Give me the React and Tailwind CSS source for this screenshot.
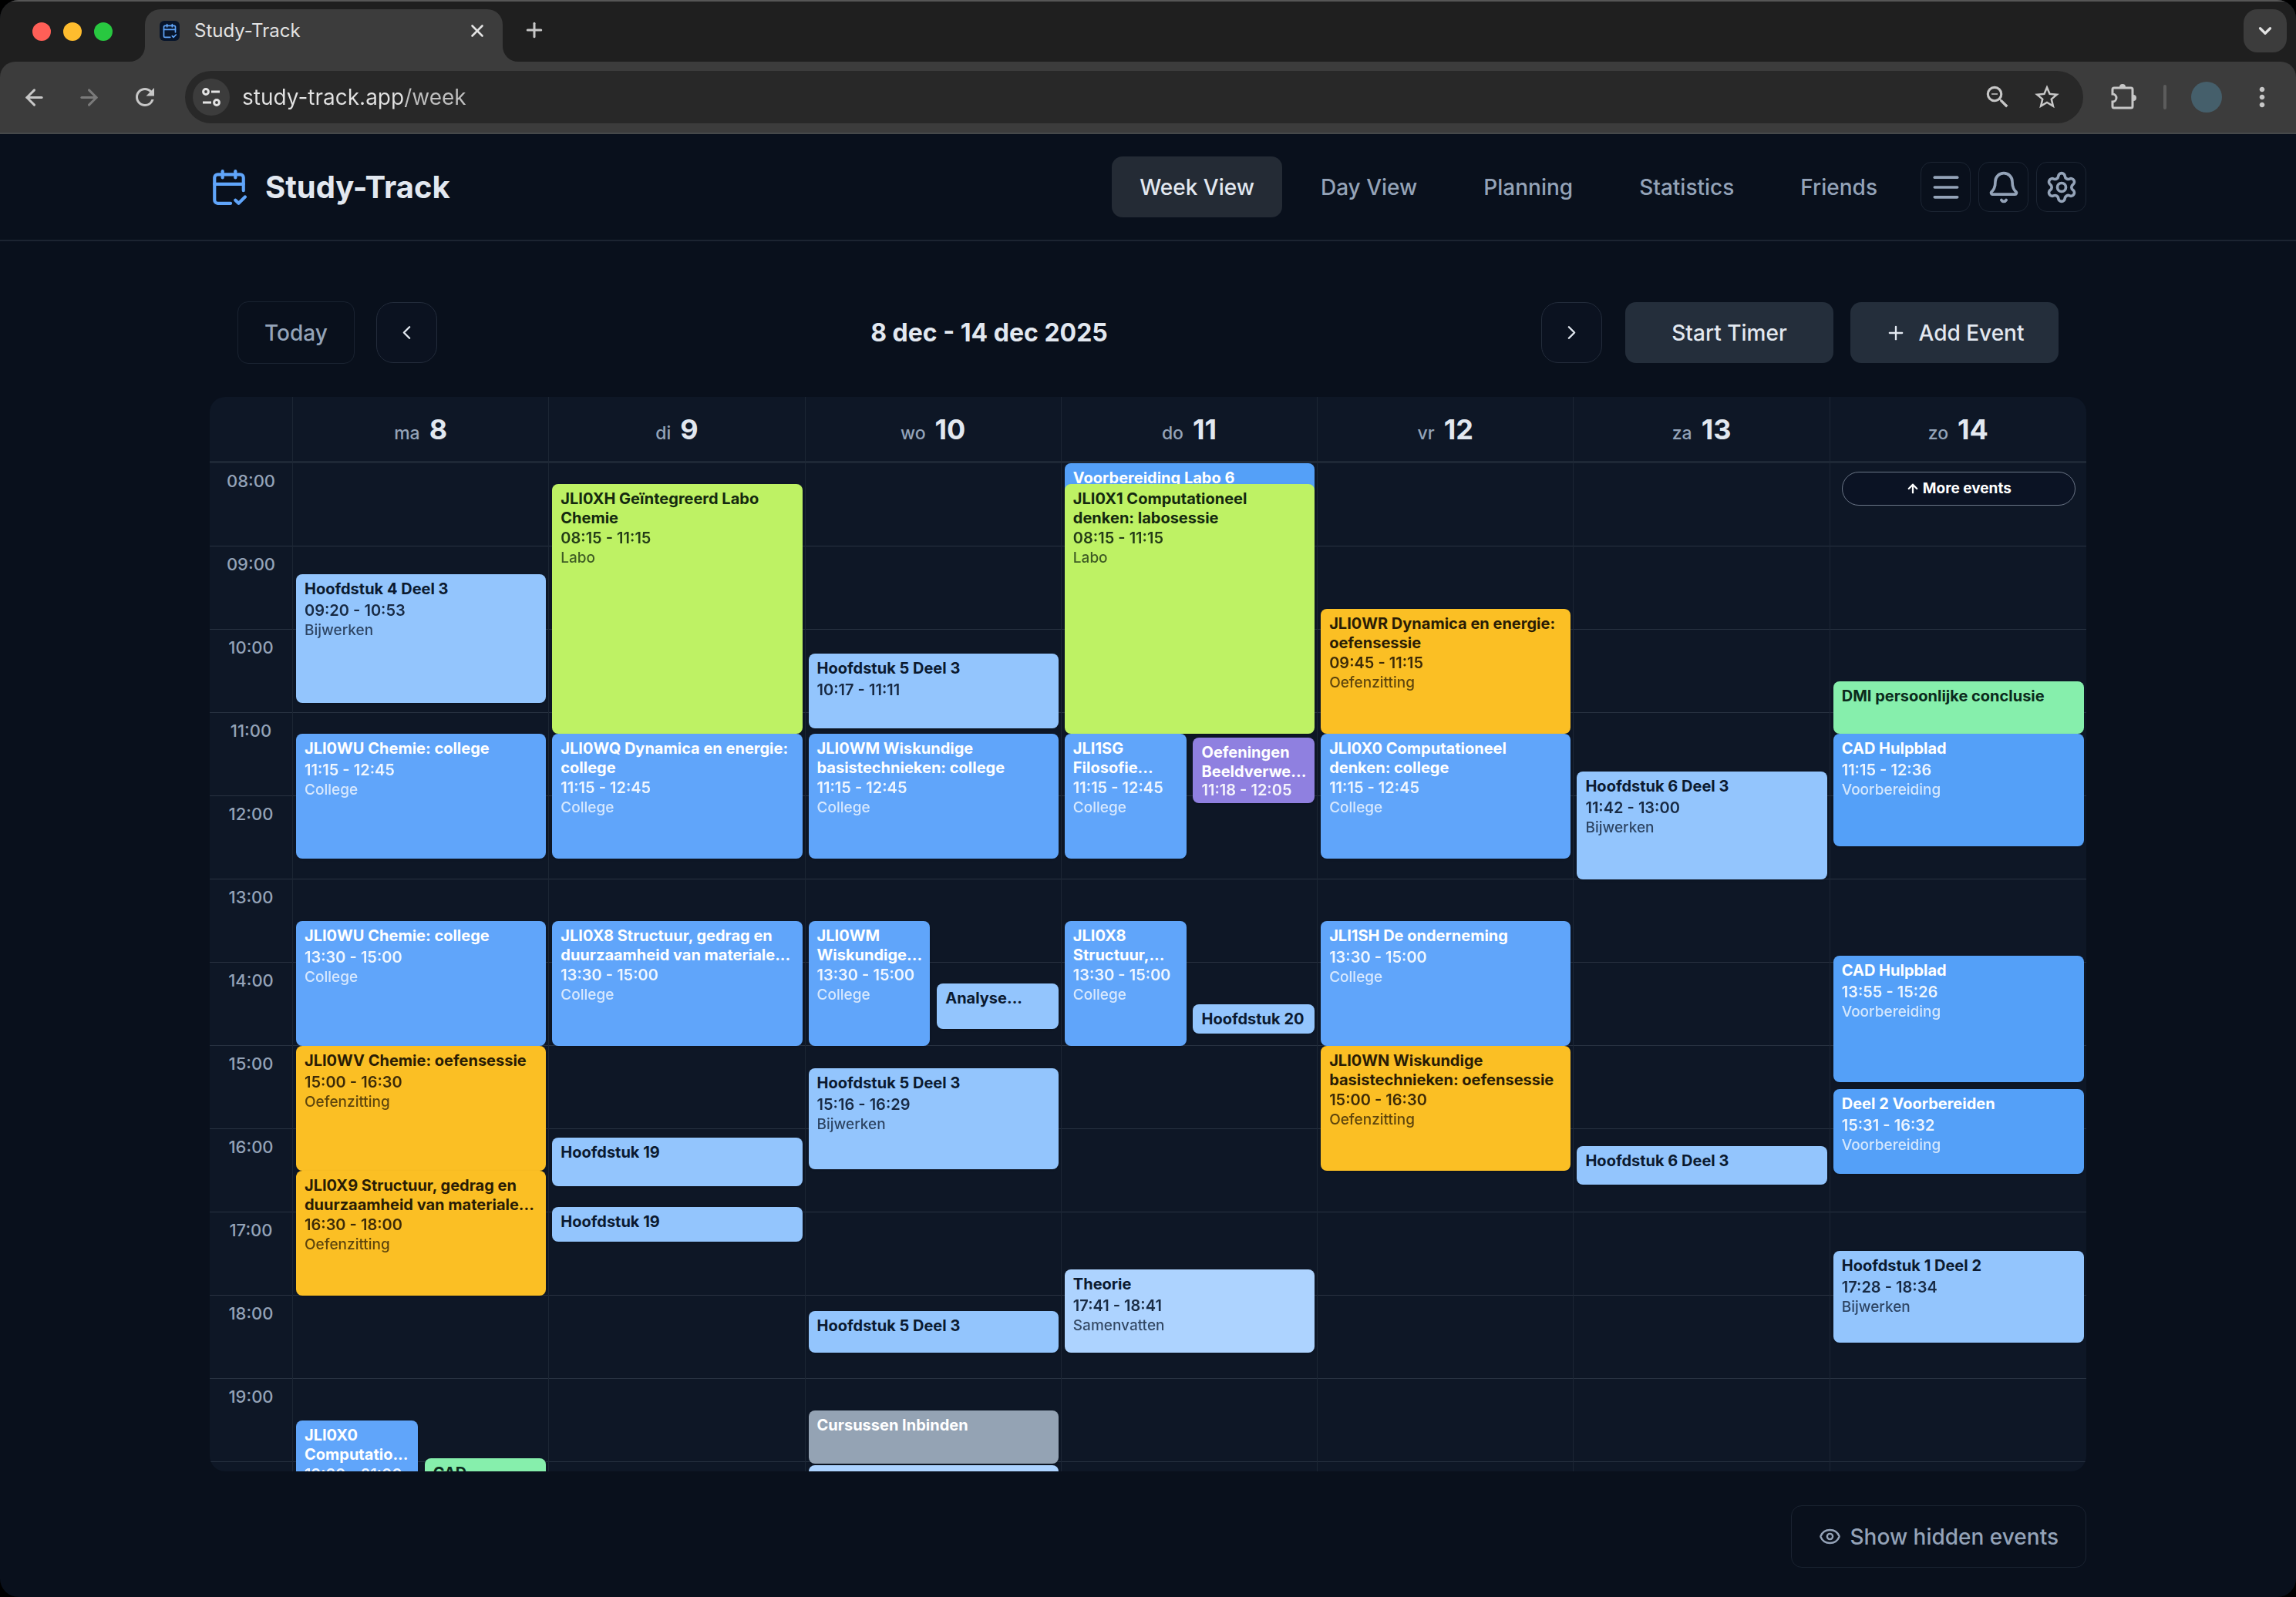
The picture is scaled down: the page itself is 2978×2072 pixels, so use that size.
import React from "react";
import {
  ArrowLeft, ArrowRight, X, Plus, ChevronDown, ChevronLeft, ChevronRight,
  CalendarCheck2, Menu, Bell, Eye, ArrowUp, Settings,
} from "lucide-react";
import { MdStarBorder, MdMoreVert, MdOutlineZoomOut, MdRefresh } from "react-icons/md";

const HOUR = 108;

const tones = {
  sky: "bg-[#93c5fd] text-[#0b1a30]",
  pale: "bg-[#add3ff] text-[#0b1a30]",
  blue: "bg-[#60a5fa] text-white",
  azure: "bg-[#54a0f8] text-white",
  lime: "bg-[#bef264] text-[#14290f]",
  amber: "bg-[#fbbf24] text-[#291c05]",
  mint: "bg-[#86efac] text-[#0b2a1c]",
  violet: "bg-[#8f80e0] text-white",
  slate: "bg-[#94a3b4] text-white",
};

const days = [
  {
    name: "ma", date: 8,
    events: [
      { from: "09:20", to: "10:53", title: "Hoofdstuk 4 Deel 3", kind: "Bijwerken", tone: "sky" },
      { from: "11:15", to: "12:45", title: "JLI0WU Chemie: college", kind: "College", tone: "blue" },
      { from: "13:30", to: "15:00", title: "JLI0WU Chemie: college", kind: "College", tone: "blue" },
      { from: "15:00", to: "16:30", title: "JLI0WV Chemie: oefensessie", kind: "Oefenzitting", tone: "amber" },
      { from: "16:30", to: "18:00", title: "JLI0X9 Structuur, gedrag en\nduurzaamheid van materiale...", kind: "Oefenzitting", tone: "amber" },
      { from: "19:30", to: "21:00", title: "JLI0X0\nComputatio...", tone: "blue", half: "left" },
      { from: "19:57", to: "20:40", title: "CAD", tone: "mint", half: "right", brief: true },
    ],
  },
  {
    name: "di", date: 9,
    events: [
      { from: "08:15", to: "11:15", title: "JLI0XH Geïntegreerd Labo\nChemie", kind: "Labo", tone: "lime" },
      { from: "11:15", to: "12:45", title: "JLI0WQ Dynamica en energie:\ncollege", kind: "College", tone: "blue" },
      { from: "13:30", to: "15:00", title: "JLI0X8 Structuur, gedrag en\nduurzaamheid van materiale...", kind: "College", tone: "blue" },
      { from: "16:06", to: "16:41", title: "Hoofdstuk 19", tone: "sky", brief: true },
      { from: "16:56", to: "17:21", title: "Hoofdstuk 19", tone: "sky", brief: true },
    ],
  },
  {
    name: "wo", date: 10,
    events: [
      { from: "10:17", to: "11:11", title: "Hoofdstuk 5 Deel 3", tone: "sky" },
      { from: "11:15", to: "12:45", title: "JLI0WM Wiskundige\nbasistechnieken: college", kind: "College", tone: "blue" },
      { from: "13:30", to: "15:00", title: "JLI0WM\nWiskundige...", kind: "College", tone: "blue", half: "left" },
      { from: "14:15", to: "14:48", title: "Analyse...", tone: "sky", half: "right", brief: true },
      { from: "15:16", to: "16:29", title: "Hoofdstuk 5 Deel 3", kind: "Bijwerken", tone: "sky" },
      { from: "18:11", to: "18:41", title: "Hoofdstuk 5 Deel 3", tone: "sky", brief: true },
      { from: "19:23", to: "20:01", title: "Cursussen Inbinden", tone: "slate", brief: true },
      { from: "20:02", to: "21:00", tone: "pale", brief: true },
    ],
  },
  {
    name: "do", date: 11,
    events: [
      { from: "08:00", to: "08:30", title: "Voorbereiding Labo 6", tone: "azure", brief: true },
      { from: "08:15", to: "11:15", title: "JLI0X1 Computationeel\ndenken: labosessie", kind: "Labo", tone: "lime" },
      { from: "11:15", to: "12:45", title: "JLI1SG\nFilosofie...", kind: "College", tone: "blue", half: "left" },
      { from: "11:18", to: "12:05", title: "Oefeningen\nBeeldverwe...", tone: "violet", half: "right", dense: true },
      { from: "13:30", to: "15:00", title: "JLI0X8\nStructuur,...", kind: "College", tone: "blue", half: "left" },
      { from: "14:30", to: "14:51", title: "Hoofdstuk 20", tone: "sky", half: "right", brief: true },
      { from: "17:41", to: "18:41", title: "Theorie", kind: "Samenvatten", tone: "pale" },
    ],
  },
  {
    name: "vr", date: 12,
    events: [
      { from: "09:45", to: "11:15", title: "JLI0WR Dynamica en energie:\noefensessie", kind: "Oefenzitting", tone: "amber" },
      { from: "11:15", to: "12:45", title: "JLI0X0 Computationeel\ndenken: college", kind: "College", tone: "blue" },
      { from: "13:30", to: "15:00", title: "JLI1SH De onderneming", kind: "College", tone: "blue" },
      { from: "15:00", to: "16:30", title: "JLI0WN Wiskundige\nbasistechnieken: oefensessie", kind: "Oefenzitting", tone: "amber" },
    ],
  },
  {
    name: "za", date: 13,
    events: [
      { from: "11:42", to: "13:00", title: "Hoofdstuk 6 Deel 3", kind: "Bijwerken", tone: "sky" },
      { from: "16:12", to: "16:40", title: "Hoofdstuk 6 Deel 3", tone: "sky", brief: true },
    ],
  },
  {
    name: "zo", date: 14, more: true,
    events: [
      { from: "10:37", to: "11:15", title: "DMI persoonlijke conclusie", tone: "mint", brief: true },
      { from: "11:15", to: "12:36", title: "CAD Hulpblad", kind: "Voorbereiding", tone: "azure" },
      { from: "13:55", to: "15:26", title: "CAD Hulpblad", kind: "Voorbereiding", tone: "azure" },
      { from: "15:31", to: "16:32", title: "Deel 2 Voorbereiden", kind: "Voorbereiding", tone: "azure" },
      { from: "17:28", to: "18:34", title: "Hoofdstuk 1 Deel 2", kind: "Bijwerken", tone: "sky" },
    ],
  },
];

const hours = Array.from({ length: 13 }, (_, i) => String(i + 8).padStart(2, "0") + ":00");

function offset(time) {
  const [h, m] = time.split(":").map(Number);
  return Math.round(((h - 8) * 60 + m) * (HOUR / 60));
}

function Event({ event }) {
  const top = offset(event.from);
  const height = offset(event.to) - top;
  const twoLines = event.title?.includes("\n");
  const side =
    event.half === "left" ? "left-1 right-1/2 mr-1" : event.half === "right" ? "left-1/2 ml-[5px] right-[3px]" : "left-1 right-[3px]";
  const timeSpacing = event.dense ? "leading-[22px]" : twoLines ? "leading-[26px]" : "mt-0.5 leading-[26px]";
  return (
    <article
      className={`absolute overflow-hidden rounded-lg px-[11px] pt-[7px] shadow-sm ${side} ${tones[event.tone]}`}
      style={{ top, height }}
    >
      {event.title && <h3 className="whitespace-pre text-[20px]/[25px] font-bold">{event.title}</h3>}
      {!event.brief && (
        <p className={`whitespace-nowrap text-[20px] font-semibold opacity-90 ${timeSpacing}`}>
          {event.from} - {event.to}
        </p>
      )}
      {event.kind && <p className="whitespace-nowrap text-[19px]/[26px] font-medium opacity-75">{event.kind}</p>}
    </article>
  );
}

function Chrome() {
  return (
    <div className="bg-[#1f1f1f]">
      <div className="flex h-20 items-stretch border-t-2 border-[#565656] pr-3">
        <div className="flex w-[188px] items-center gap-4 pl-[42px]">
          <span className="size-6 rounded-full bg-[#ff5f57]" />
          <span className="size-6 rounded-full bg-[#febc2e]" />
          <span className="size-6 rounded-full bg-[#28c840]" />
        </div>
        <div className="flex">
          <svg className="-ml-5 size-5 shrink-0 self-end" viewBox="0 0 20 20" aria-hidden="true">
            <path d="M20 0v20H0A20 20 0 0 0 20 0Z" fill="#3c3c3c" />
          </svg>
          <div className="mt-2.5 flex w-[464px] items-center rounded-t-[20px] bg-[#3c3c3c] pr-5 pb-3 pl-[19px]">
            <span className="flex size-[26px] items-center justify-center rounded-md bg-[#08152b] text-[#60a5fa]">
              <CalendarCheck2 size={20} strokeWidth={2} />
            </span>
            <span className="ml-[19px] flex-1 text-[24px] text-[#e3e3e3]">Study-Track</span>
            <button aria-label="Close tab" className="text-[#e3e3e3]"><X size={26} strokeWidth={2.4} /></button>
          </div>
          <svg className="size-5 shrink-0 self-end" viewBox="0 0 20 20" aria-hidden="true">
            <path d="M0 0v20h20A20 20 0 0 1 0 0Z" fill="#3c3c3c" />
          </svg>
        </div>
        <button aria-label="New tab" className="ml-1.5 pb-1 text-[#c7c7c7]"><Plus size={30} strokeWidth={2.4} /></button>
        <button aria-label="Search tabs" className="mt-2.5 ml-auto flex size-14 items-center justify-center rounded-[18px] bg-[#3c3c3c] text-[#e3e3e3]">
          <ChevronDown size={26} strokeWidth={3} />
        </button>
      </div>
      <div className="flex h-[94px] items-center rounded-t-[20px] border-b-2 border-[#46494a] bg-[#3c3c3c] text-[#c7c7c7]">
        <button aria-label="Back" className="ml-[28px]"><ArrowLeft size={33} strokeWidth={2.2} /></button>
        <button aria-label="Forward" className="ml-[38px] text-[#7a7a7a]"><ArrowRight size={33} strokeWidth={2.2} /></button>
        <button aria-label="Reload" className="ml-[38px]"><MdRefresh size={36} /></button>
        <div className="ml-[34px] flex h-[68px] flex-1 items-center rounded-full bg-[#282828] pr-7 pl-2.5">
          <button aria-label="Site information" className="flex size-12 items-center justify-center rounded-full bg-[#3c3c3c] text-[#e3e3e3]">
            <svg width="28" height="28" viewBox="0 0 28 28" fill="none" stroke="currentColor" strokeWidth="3">
              <circle cx="7" cy="7" r="3.4" /><path d="M14 7h11M3 21h11" /><circle cx="21" cy="21" r="3.4" />
            </svg>
          </button>
          <input
            aria-label="Address"
            defaultValue="study-track.app/week"
            className="ml-4 min-w-0 flex-1 bg-[linear-gradient(90deg,#e3e3e3_212px,#c0c0c0_212px)] bg-clip-text text-[28px] text-transparent outline-none"
          />
          <button aria-label="Zoom" className="mr-[26px]"><MdOutlineZoomOut size={38} /></button>
          <button aria-label="Bookmark"><MdStarBorder size={38} /></button>
        </div>
        <button aria-label="Extensions" className="ml-[34px]">
          <svg width="38" height="38" viewBox="0 0 38 38" aria-hidden="true">
            <path d="M6 7h22a2 2 0 0 1 2 2v22a2 2 0 0 1-2 2H6a2 2 0 0 1-2-2v-6a5 5 0 0 0 0-10V9a2 2 0 0 1 2-2Z" fill="none" stroke="currentColor" strokeWidth="3" />
            <path d="M13 6a4 4 0 0 1 8 0ZM31 16a4 4 0 0 1 0 8Z" fill="currentColor" />
          </svg>
        </button>
        <span className="ml-[32px] h-8 w-1 rounded-full bg-[#5c5c5c]" />
        <button aria-label="Profile" className="ml-8 size-10 rounded-full bg-[#455f6b]" />
        <button aria-label="Browser menu" className="mr-[24px] ml-[32px]"><MdMoreVert size={40} /></button>
      </div>
    </div>
  );
}

const iconButton = "flex size-[65px] items-center justify-center rounded-[14px] border border-[#1c2533]";
const arrowButton = "flex size-[79px] items-center justify-center rounded-[22px] border border-[#232c3b] bg-[#0b1220] text-[#e2e8f0]";

export default function App() {
  return (
    <div className="min-h-screen bg-black font-[Inter,sans-serif] text-[#e2e8f0]">
      <div className="flex min-h-screen flex-col overflow-hidden rounded-[24px] bg-[#09101c]">
        <Chrome />
        <header className="border-b-2 border-[#1c2431] px-[272px]">
          <div className="flex h-[137px] items-center">
            <a href="#" className="flex items-center gap-[22px]">
              <CalendarCheck2 size={50} strokeWidth={2} className="text-[#60a5fa]" />
              <span className="text-[40px] font-bold">Study-Track</span>
            </a>
            <nav className="ml-auto flex gap-3.5 text-[28px] font-medium text-[#94a3b8]">
              <a href="#" className="flex h-[79px] items-center rounded-[14px] bg-[#242b35] px-9 text-[#e2e8f0]">Week View</a>
              {["Day View", "Planning", "Statistics", "Friends"].map((t) => (
                <a key={t} href="#" className="flex h-[79px] items-center px-9">{t}</a>
              ))}
            </nav>
            <div className="ml-5 flex gap-2.5 text-[#94a3b8]">
              <button aria-label="Menu" className={iconButton}><Menu size={44} strokeWidth={2} /></button>
              <button aria-label="Notifications" className={iconButton}><Bell size={44} strokeWidth={2} /></button>
              <button aria-label="Settings" className={iconButton}><Settings size={44} strokeWidth={2} /></button>
            </div>
          </div>
        </header>
        <main className="px-[272px]">
          <div className="mt-[78px] flex items-center px-9">
            <button className="h-[81px] rounded-[14px] border border-[#1a2331] px-[34px] text-[28px] font-medium text-[#94a3b8]">Today</button>
            <button aria-label="Previous week" className={`ml-7 ${arrowButton}`}><ChevronLeft size={29} /></button>
            <h1 className="flex-1 text-center text-[32px] font-bold">8 dec - 14 dec 2025</h1>
            <button aria-label="Next week" className={arrowButton}><ChevronRight size={29} /></button>
            <button className="ml-[30px] h-[79px] w-[270px] rounded-[14px] bg-[#242e3b] text-[28px] font-medium">Start Timer</button>
            <button className="ml-[22px] flex h-[79px] w-[270px] items-center justify-center gap-4 rounded-[14px] bg-[#242e3b] text-[28px] font-medium">
              <Plus size={28} strokeWidth={2} />Add Event
            </button>
          </div>
          <section className="mt-[43px] h-[1394px] overflow-hidden rounded-[20px] bg-[#0e1726]">
            <div className="grid grid-cols-[108px_repeat(7,1fr)] border-b-[3px] border-[#1e2836]">
              <div className="h-[83px] border-r border-[#1c2634]" />
              {days.map((d) => (
                <div key={d.name} className="flex h-[83px] items-baseline justify-center gap-3 border-r border-[#1c2634] pt-5 last:border-r-0">
                  <span className="text-[23px] font-medium text-[#94a3b8]">{d.name}</span>
                  <span className="text-[36px]/[44px] font-bold">{d.date}</span>
                </div>
              ))}
            </div>
            <div className="grid grid-cols-[108px_repeat(7,1fr)]">
              <div className="border-r border-[#1c2634]">
                {hours.map((h) => (
                  <div key={h} className="h-[108px] border-b border-[#283241] pt-[7px] text-center text-[22px]/[32px] font-medium text-[#94a3b8]">{h}</div>
                ))}
              </div>
              {days.map((d) => (
                <div key={d.name} className="relative border-r border-[#1c2634] last:border-r-0">
                  {hours.map((h) => (
                    <div key={h} className="h-[108px] border-b border-[#283241]" />
                  ))}
                  {d.events.map((e, i) => <Event key={i} event={e} />)}
                  {d.more && (
                    <button className="absolute top-[11px] right-3.5 left-[15px] flex h-11 items-center justify-center gap-1 rounded-full border border-[#6b7687] bg-[#0b1324] text-[19px] font-bold text-white">
                      <ArrowUp size={18} strokeWidth={3} />More events
                    </button>
                  )}
                </div>
              ))}
            </div>
          </section>
          <div className="mt-11 flex justify-end">
            <button className="flex h-[81px] items-center gap-3 rounded-[14px] border border-[#1a2331] px-[35px] text-[28px] font-medium text-[#94a3b8]">
              <Eye size={29} />Show hidden events
            </button>
          </div>
        </main>
      </div>
    </div>
  );
}
